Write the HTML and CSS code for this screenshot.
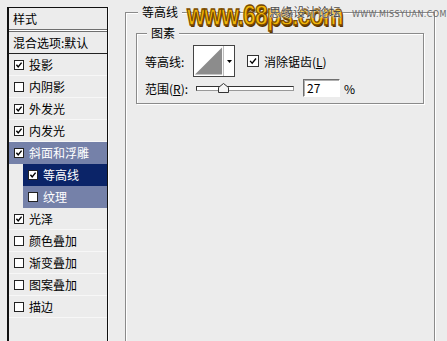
FILE: index.html
```html
<!DOCTYPE html>
<html lang="zh-CN">
<head>
    <meta charset="UTF-8">
    <title>图层样式 - 等高线</title>
    <link rel="stylesheet" href="styles.css">
</head>
<body>
    <div class="dialog">
        <div class="styles-panel">
            <div class="panel-head">样式</div>
            <div class="panel-sep"></div>
            <div class="panel-blend">混合选项:默认</div>
            <ul class="style-list">
                <li class="item"><span class="box"><svg viewBox="0 0 9 9"><path d="M1.6 4.2 L3.6 6.6 L7.4 1.8" /></svg></span>投影</li>
                <li class="item"><span class="box"></span>内阴影</li>
                <li class="item"><span class="box"><svg viewBox="0 0 9 9"><path d="M1.6 4.2 L3.6 6.6 L7.4 1.8" /></svg></span>外发光</li>
                <li class="item"><span class="box"><svg viewBox="0 0 9 9"><path d="M1.6 4.2 L3.6 6.6 L7.4 1.8" /></svg></span>内发光</li>
                <li class="item parent-sel"><span class="box"><svg viewBox="0 0 9 9"><path d="M1.6 4.2 L3.6 6.6 L7.4 1.8" /></svg></span>斜面和浮雕</li>
                <li class="item sub current"><span class="box"><svg viewBox="0 0 9 9"><path d="M1.6 4.2 L3.6 6.6 L7.4 1.8" /></svg></span>等高线</li>
                <li class="item sub parent-sel"><span class="box"></span>纹理</li>
                <li class="item"><span class="box"><svg viewBox="0 0 9 9"><path d="M1.6 4.2 L3.6 6.6 L7.4 1.8" /></svg></span>光泽</li>
                <li class="item"><span class="box"></span>颜色叠加</li>
                <li class="item"><span class="box"></span>渐变叠加</li>
                <li class="item"><span class="box"></span>图案叠加</li>
                <li class="item"><span class="box"></span>描边</li>
            </ul>
        </div>

        <fieldset class="group outer">
            <legend>等高线</legend>
            <fieldset class="group inner">
                <legend>图素</legend>
                <div class="row row-contour">
                    <span class="label">等高线:</span>
                    <div class="contour-pick">
                        <svg class="contour-preview" viewBox="0 0 30 30">
                            <rect x="0" y="0" width="30" height="30" fill="#fff" />
                            <polygon points="1,29 29,1 29,29" fill="#8c8c8c" />
                        </svg>
                        <span class="contour-arrow"><svg viewBox="0 0 5 3"><polygon points="0,0 5,0 2.5,3" /></svg></span>
                    </div>
                    <span class="check">
                        <span class="box box-lg"><svg viewBox="0 0 12 12"><path d="M2.5 5.8 L5 8.6 L9.6 3" /></svg></span>
                        <span>消除锯齿(<u>L</u>)</span>
                    </span>
                </div>
                <div class="row row-range">
                    <span class="label">范围(<u>R</u>):</span>
                    <div class="slider">
                        <span class="track"></span>
                        <svg class="thumb" viewBox="0 0 11 10"><polygon points="5.5,0.5 10.5,4.5 10.5,9.5 0.5,9.5 0.5,4.5" /></svg>
                    </div>
                    <span class="num">27</span>
                    <span class="pct">%</span>
                </div>
            </fieldset>
        </fieldset>

        <div class="watermark">
            <span class="wm-site">www.68ps.com</span>
            <span class="wm-cn">思缘设计论坛</span>
            <span class="wm-url">WWW.MISSYUAN.COM</span>
        </div>
    </div>
</body>
</html>
```

FILE: styles.css
```css
* {
    box-sizing: border-box;
}

body {
    margin: 0;
    padding: 0;
    background: #ececec;
    height: 341px;
    overflow: hidden;
    font-family: 'Noto Sans CJK SC', 'DejaVu Sans', sans-serif;
    font-size: 12px;
    color: #000;
}

.dialog {
    position: relative;
    display: flex;
    align-items: flex-start;
    height: 341px;
}

/* left list of layer styles */
.styles-panel {
    width: 101px;
    height: 360px;
    margin: 7px 0 0 7px;
    border: 1px solid #111;
    border-left-width: 2px;
    background: #ececec;
    box-shadow: 1px 0 0 #fafafa;
}

.panel-head,
.panel-blend {
    padding-left: 4px;
    line-height: 21px;
    height: 21px;
}

.panel-sep {
    height: 3px;
    background: #fff;
    border-top: 1px solid #6e6e6e;
    border-bottom: 1px solid #6e6e6e;
}

.panel-blend {
    height: 22px;
    border-bottom: 1px solid #222;
}

.style-list {
    list-style: none;
    margin: 0;
    padding: 0;
}

.item {
    display: flex;
    align-items: center;
    gap: 5px;
    height: 22px;
    padding-left: 5px;
    border-bottom: 1px solid #f7f7f7;
}

.item.sub {
    margin-left: 14px;
}

.item.parent-sel {
    background: #7581a9;
    color: #fff;
    border-bottom-color: #7581a9;
}

.item.current {
    background: #0b2468;
    color: #fff;
    border-bottom-color: #0b2468;
}

.box {
    display: inline-block;
    width: 10px;
    height: 10px;
    background: #fff;
    border: 1px solid #222;
    flex: none;
}

.box svg {
    display: block;
    width: 100%;
    height: 100%;
}

.box path {
    fill: none;
    stroke: #000;
    stroke-width: 1.6;
}

.box-lg {
    width: 12px;
    height: 12px;
    border-color: #333;
}

/* right side group boxes */
.group {
    margin: 0;
    padding: 0 10px;
    border: 1px solid #8a8a8a;
    box-shadow: inset 1px 1px 0 #fff, 1px 1px 0 #fff;
    min-inline-size: 0;
}

.group legend {
    margin-left: 2px;
    padding: 0 4px;
    line-height: 14px;
    background: #ececec;
}

.outer {
    width: 310px;
    height: 400px;
    margin: 5px 0 0 17px;
}

.inner {
    margin-top: 7px;
    padding: 5px 0 6px 8px;
}

.row {
    display: flex;
    align-items: center;
}

.row-contour {
    height: 32px;
}

.row-range {
    height: 18px;
    margin-top: 2px;
}

.label {
    width: 48px;
    flex: none;
}

.contour-pick {
    display: flex;
    width: 42px;
    height: 32px;
    border: 1px solid #444;
    background: #fff;
}

.contour-preview {
    width: 30px;
    height: 30px;
    display: block;
    border-right: 1px solid #bdbdbd;
}

.contour-arrow {
    flex: 1;
    display: flex;
    align-items: center;
    justify-content: center;
}

.contour-arrow svg {
    width: 5px;
    height: 3px;
}

.check {
    display: flex;
    align-items: center;
    gap: 5px;
    margin-left: 12px;
}

.slider {
    position: relative;
    width: 98px;
    height: 18px;
    margin-left: 3px;
    display: flex;
    align-items: center;
}

.track {
    display: block;
    width: 100%;
    height: 5px;
    background: #fff;
    border: 1px solid #333;
    border-right-color: #999;
    border-bottom-color: #999;
}

.thumb {
    position: absolute;
    left: 22px;
    top: 4px;
    width: 11px;
    height: 10px;
}

.thumb polygon {
    fill: #f4f4f4;
    stroke: #333;
    stroke-width: 1;
}

.num {
    width: 37px;
    height: 18px;
    margin-left: 9px;
    padding: 0 3px;
    line-height: 16px;
    background: #fff;
    border: 1px solid;
    border-color: #6f6f6f #fff #fff #6f6f6f;
    box-shadow: inset 1px 1px 0 #b0b0b0;
}

.pct {
    margin-left: 4px;
}

/* watermark stamped over the top of the dialog */
.watermark {
    position: absolute;
    left: 187px;
    top: 0;
    width: 260px;
    height: 34px;
}

.wm-site {
    position: absolute;
    left: 0;
    top: -2px;
    font-family: 'Liberation Sans', Arial, sans-serif;
    font-weight: bold;
    font-size: 23px;
    letter-spacing: -0.8px;
    color: #f2b707;
    -webkit-text-stroke: 1px #7a4a00;
    text-shadow: 1px 1px 0 #5a3500, 0 0 2px #fff2c0;
    transform: scaleY(1.3);
    transform-origin: top left;
}

.wm-cn {
    position: absolute;
    left: 82px;
    top: 3px;
    font-size: 12px;
    color: #4a4a4a;
    text-shadow: 0 0 2px #fff, 0 0 1px #fff;
}

.wm-url {
    position: absolute;
    left: 165px;
    top: 10px;
    font-family: 'DejaVu Sans', sans-serif;
    font-size: 8px;
    letter-spacing: 0.4px;
    color: #6a6a6a;
}
```
